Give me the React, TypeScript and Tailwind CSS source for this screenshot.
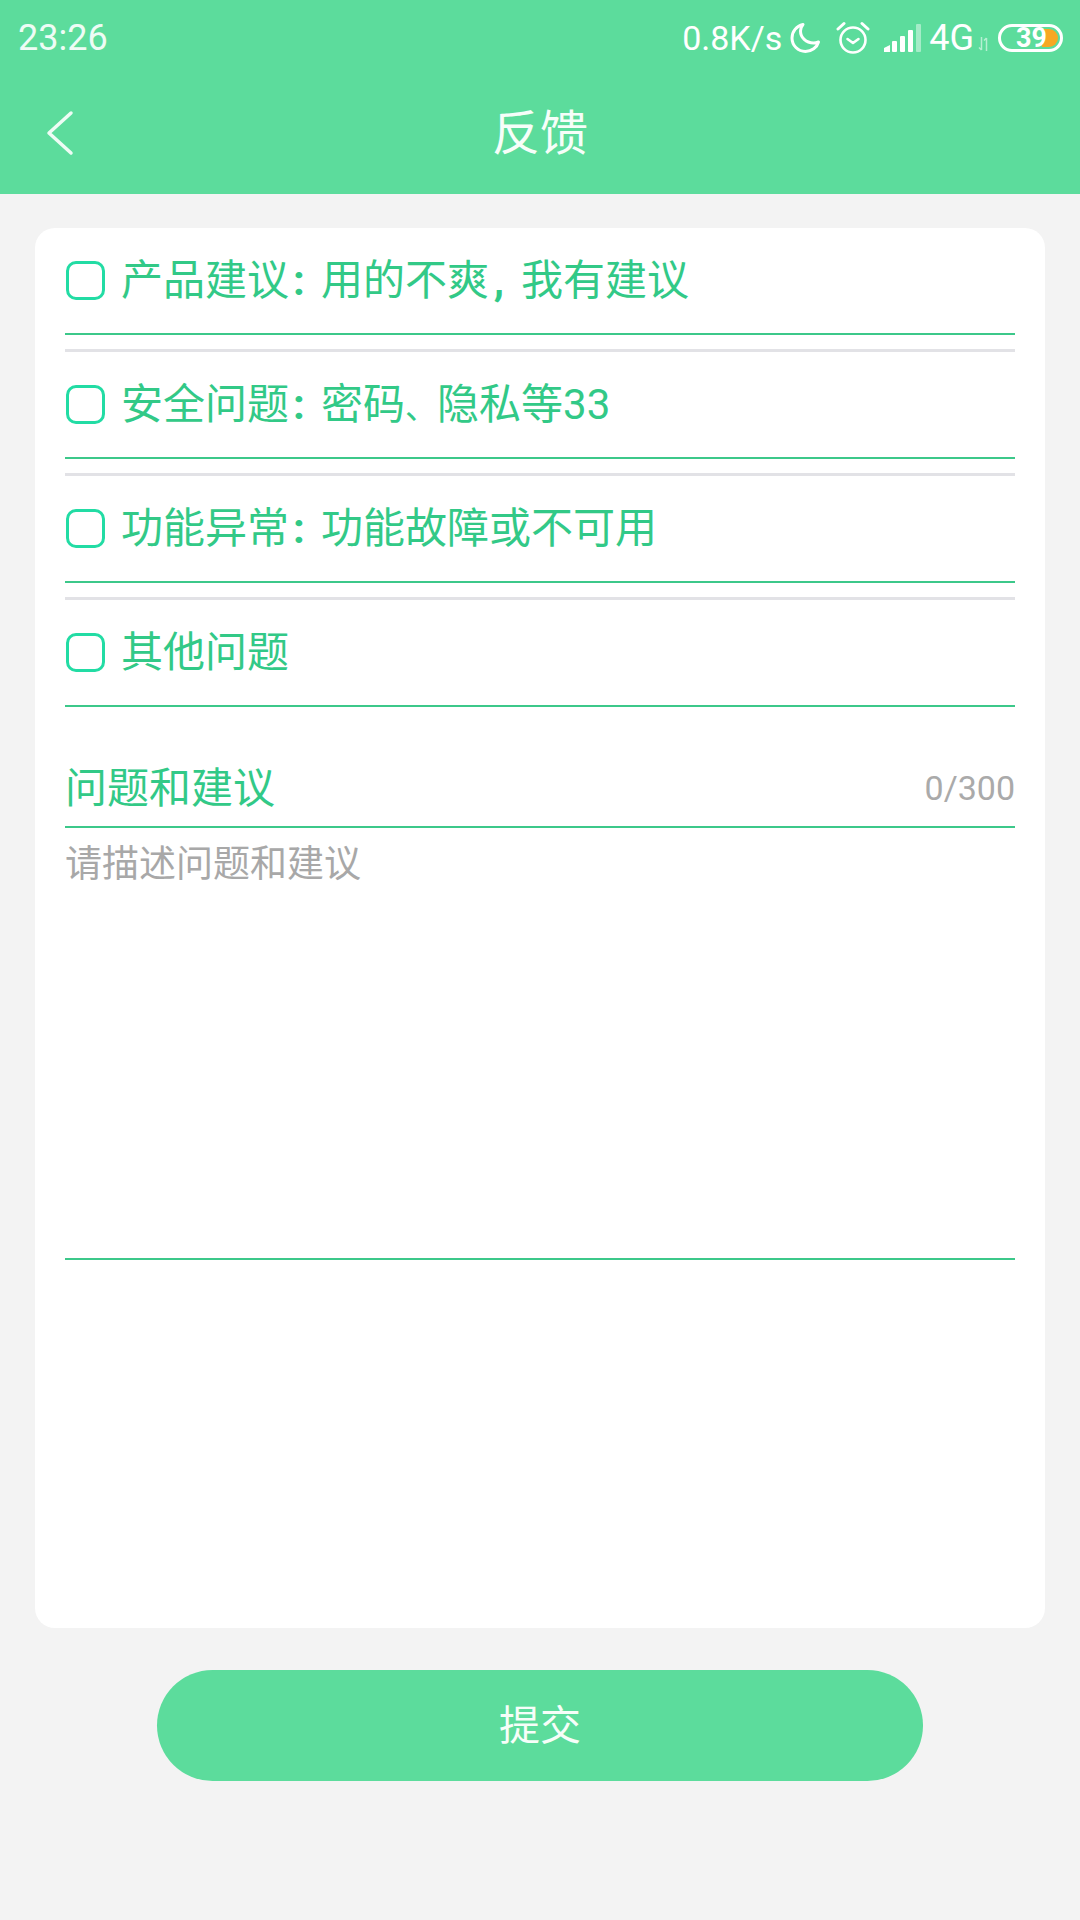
const cjk = "font-['Roboto','Noto_Sans_CJK_SC',sans-serif]";

function Sep({ c }: { c: string }) {
  return <span className="inline-block w-[32px] pr-[12px] text-center font-bold">{c}</span>;
}

function Row({ children, divider }: { children: React.ReactNode; divider?: boolean }) {
  return (
    <>
      <div className="flex h-[107px] items-start border-b-2 border-[#3cc88a]">
        <div className="ml-[1px] mt-[33px] h-[39px] w-[39px] shrink-0 rounded-[10px] border-[3px] border-[#22dca4]" />
        <div className="ml-[16px] mt-[28px] whitespace-nowrap text-[42px] leading-[50px] text-[#32c987]">{children}</div>
      </div>
      {divider && <div className="mt-[14px] h-[3px] bg-[#e2e2e6]" />}
    </>
  );
}

export default function App() {
  return (
    <div className={`flex h-[1920px] w-[1080px] flex-col bg-[#f3f3f3] ${cjk}`}>
      <header className="h-[194px] shrink-0 bg-[#5cdc9c] text-white">
        <div className="flex h-[75px] items-center justify-between pl-[18px] pr-[17px] pt-[1px]">
          <span className="text-[36px] leading-none text-[#eefcf5]">23:26</span>
          <div className="flex items-center">
            <span className="text-[34px] leading-none">0.8K/s</span>
            <svg className="ml-[8px]" width="32" height="32" viewBox="0 0 32 32" fill="none" stroke="white" strokeWidth="3" strokeLinejoin="round">
              <path d="M13 2.5C6.5 4 2 9.5 2 16c0 7.5 6 13.5 13.5 13.5 6 0 11.5-4 13-9.5-2 .8-3.5 1-5 1C16 21 10.5 15.5 10.5 9c0-2.5.8-4.5 2.5-6.5z" />
            </svg>
            <svg className="ml-[14px]" width="34" height="34" viewBox="0 0 34 34" fill="none" stroke="white" strokeWidth="2.6" strokeLinecap="round" strokeLinejoin="round">
              <circle cx="17" cy="19" r="12.5" />
              <path d="M11.5 18l5.5 4 5.5-4" />
              <path d="M2 8l6-5.5M32 8l-6-5.5" strokeWidth="3" />
            </svg>
            <svg className="ml-[14px]" width="38" height="30" viewBox="0 0 38 30">
              <path d="M0 29v-4l6-3v7z" fill="white" />
              <rect x="8" y="18" width="5" height="11" rx="1" fill="white" />
              <rect x="16" y="13" width="5" height="16" rx="1" fill="white" />
              <rect x="24" y="7" width="5" height="22" rx="1" fill="white" />
              <rect x="32" y="1" width="5" height="28" rx="1" fill="white" fillOpacity="0.45" />
            </svg>
            <span className="ml-[7px] text-[36px] leading-none">4G</span>
            <svg className="ml-[4px] mt-[12px]" width="12" height="14" viewBox="0 0 12 14" fill="none" stroke="white" strokeOpacity="0.55" strokeWidth="1.5">
              <path d="M3.5 0v13M1 10.5l2.5 2.5M8.5 14V1M6 3.5L8.5 1" />
            </svg>
            <div className="relative ml-[8px] h-[28px] w-[65px] rounded-full border-[3px] border-white">
              <div className="absolute bottom-[2px] right-[2px] top-[2px] w-[16px] rounded-r-full bg-[#f7a823]" />
              <span className="absolute left-[15px] top-[-2px] h-[26px] text-[27px] font-bold leading-[26px] text-white">39</span>
            </div>
          </div>
        </div>
        <nav className="relative flex h-[119px] items-center justify-center pb-[1px]">
          <svg className="absolute left-[46px] top-[35px]" width="28" height="46" viewBox="0 0 28 46" fill="none" stroke="#eefcf5" strokeWidth="3.5" strokeLinecap="round" strokeLinejoin="round">
            <path d="M25 3L3 23l22 20" />
          </svg>
          <h1 className="text-[48px] font-normal leading-[60px] text-[#f6fef9]">反馈</h1>
        </nav>
      </header>

      <main className="mx-[35px] mt-[34px] h-[1400px] rounded-[20px] bg-white px-[30px]">
        <Row divider>
          产品建议<Sep c=":" />用的不爽<Sep c="," />我有建议
        </Row>
        <Row divider>
          安全问题<Sep c=":" />密码<span className="inline-block w-[32px] text-[32px]">、</span>隐私等33
        </Row>
        <Row divider>
          功能异常<Sep c=":" />功能故障或不可用
        </Row>
        <Row>其他问题</Row>

        <div className="flex h-[121px] items-end justify-between border-b-2 border-[#3cc88a] pb-[12px]">
          <span className="text-[42px] leading-[50px] text-[#32c987]">问题和建议</span>
          <span className="pb-[6px] text-[34px] leading-[40px] text-[#aaaaaa]">0/300</span>
        </div>
        <div className="h-[432px] border-b-2 border-[#3cc88a] pt-[14px] text-[37px] leading-[46px] text-[#a8a8a8]">
          请描述问题和建议
        </div>
      </main>

      <button className="mx-auto mt-[42px] h-[111px] w-[766px] rounded-full bg-[#5cdc9c] pt-[2px] text-[41px] text-[#f6fef9]">提交</button>
    </div>
  );
}
